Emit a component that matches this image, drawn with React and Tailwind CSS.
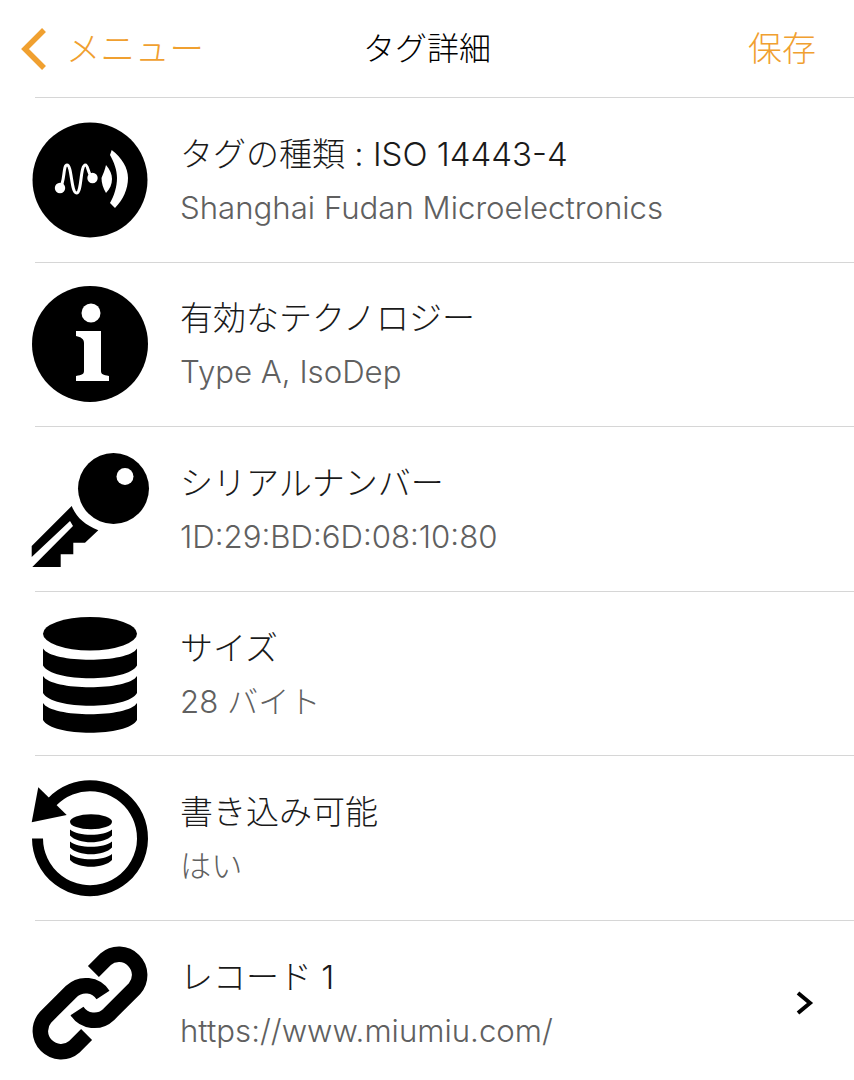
import React from 'react';

const NfcIcon = () => (
  <svg viewBox="0 0 120 120" className="w-[120px] h-[120px] shrink-0">
    <circle cx="60" cy="60" r="57.5" fill="#000" />
    <path d="M30 68 C35 62 33 45 37 45 C42 45 41 73 46.5 73 C52 73 50 45 55.5 45 C58 45 58 54 62.5 58" fill="none" stroke="#fff" strokeWidth="3" />
    <circle cx="30" cy="68" r="5.2" fill="#fff" />
    <circle cx="62.5" cy="58" r="5.2" fill="#fff" />
    <path d="M76 45 C80 50 82 54 82 59 C82 64 80 69 76 73 C73 68 71.5 63 71.5 58 C73 54 75 50 76 45 Z" fill="#fff" />
    <path d="M81.7 30 C92 38 98 48 98 58 C98 69 93 80 85 88 L80 83 C84 76 87 67 87 58 C87 50 84 42 80 35 Z" fill="#fff" />
  </svg>
);

const InfoIcon = () => (
  <svg viewBox="0 0 120 120" className="w-[120px] h-[120px] shrink-0">
    <circle cx="60" cy="60" r="58" fill="#000" />
    <circle cx="61" cy="29" r="9.5" fill="#fff" />
    <path d="M46 47 H71 V87 C71 90 73 91 79 92 V97 H46 V92 C52 91 54 90 54 87 V59 C54 55 51 53 46 52 Z" fill="#fff" />
  </svg>
);

const KeyIcon = () => (
  <svg viewBox="0 0 120 120" className="w-[120px] h-[120px] shrink-0">
    <circle cx="83.5" cy="39.5" r="35.5" fill="#000" />
    <circle cx="95" cy="27.5" r="8.5" fill="#fff" />
    <path d="M41.7 57 C46 68 55 76 68.3 81.3 L55 93.7 H43.3 V105.3 H30.7 V118 H2.3 L43 77 L40 72 L1.7 108 V97 Z" fill="#000" />
  </svg>
);

const DbBand = ({ y }) => (
  <path d={`M13 ${y} C22 ${y + 15} 98 ${y + 15} 107 ${y} V${y + 17} C98 ${y + 34} 22 ${y + 34} 13 ${y + 17} Z`} fill="#000" />
);

const DbIcon = () => (
  <svg viewBox="0 0 120 120" className="w-[120px] h-[120px] shrink-0">
    <ellipse cx="60" cy="19.7" rx="47" ry="16.7" fill="#000" />
    <DbBand y={34.5} />
    <DbBand y={62} />
    <DbBand y={89} />
  </svg>
);

const MiniBand = ({ y }) => (
  <path d={`M40 ${y} C48 ${y + 7} 74 ${y + 7} 82 ${y} V${y + 6} C74 ${y + 15} 48 ${y + 15} 40 ${y + 6} Z`} fill="#000" />
);

const RestoreIcon = () => (
  <svg viewBox="0 0 120 120" className="w-[120px] h-[120px] shrink-0">
    <path d="M7.5 60.5 A52.5 52.5 0 1 0 22 24" fill="none" stroke="#000" strokeWidth="11" />
    <path d="M8.3 9.3 L36.7 37 L1.7 44.3 Z" fill="#000" />
    <ellipse cx="61" cy="43.7" rx="21" ry="7.5" fill="#000" />
    <MiniBand y={51.5} />
    <MiniBand y={63.5} />
    <MiniBand y={76} />
  </svg>
);

const LinkIcon = () => (
  <svg viewBox="0 0 120 120" className="w-[120px] h-[120px] shrink-0">
    <g fill="none" stroke="#000" strokeWidth="15.5">
      <path d="M63.4 28.4 L75.4 16.4 A20.7 20.7 0 0 1 104.6 45.6 L78.6 71.6 A20.7 20.7 0 0 1 47 68" />
      <path d="M63.4 28.4 L75.4 16.4 A20.7 20.7 0 0 1 104.6 45.6 L78.6 71.6 A20.7 20.7 0 0 1 47 68" transform="rotate(180 60 60)" />
    </g>
  </svg>
);

const rows = [
  { Icon: NfcIcon, title: 'タグの種類 : ISO 14443-4', sub: 'Shanghai Fudan Microelectronics' },
  { Icon: InfoIcon, title: '有効なテクノロジー', sub: 'Type A, IsoDep' },
  { Icon: KeyIcon, title: 'シリアルナンバー', sub: '1D:29:BD:6D:08:10:80' },
  { Icon: DbIcon, title: 'サイズ', sub: '28 バイト' },
  { Icon: RestoreIcon, title: '書き込み可能', sub: 'はい' },
  { Icon: LinkIcon, title: 'レコード 1', sub: 'https://www.miumiu.com/', chevron: true },
];

export default function App() {
  return (
    <div className="w-[854px] h-[1080px] overflow-hidden bg-white font-['Inter','Noto_Sans_CJK_JP',sans-serif] font-light">
      {/* Nav bar */}
      <div className="h-[97px] grid grid-cols-[1fr_auto_1fr] items-center px-[21px]">
        <div className="flex items-center gap-[19px] text-[#f0a030] text-[34.5px]">
          <svg viewBox="0 0 26 44" className="w-[26px] h-[44px]">
            <path d="M23 3 L4 22 L23 41" fill="none" stroke="#f0a030" strokeWidth="5.5" />
          </svg>
          <span>メニュー</span>
        </div>
        <div className="text-center text-[32px] text-black">タグ詳細</div>
        <div className="text-right text-[#f0a030] text-[34px] mr-[17px]">保存</div>
      </div>

      {/* Detail rows */}
      {rows.map(({ Icon, title, sub, chevron }) => (
        <div key={title} className="ml-[35px] h-[164.6px] border-t border-[#d6d6d6] flex items-center">
          <div className="-ml-[5px]">
            <Icon />
          </div>
          <div className="ml-[30px] flex-1 flex flex-col gap-[12px]">
            <div className="text-[33px] leading-[44px] text-[#1a1a1a]">{title}</div>
            <div className="text-[31.2px] leading-[40px] text-[#606060]">{sub}</div>
          </div>
          {chevron && (
            <svg viewBox="0 0 18 24" className="w-[18px] h-[24px] mr-[40px]">
              <path d="M2 2 L14 12 L2 22" fill="none" stroke="#000" strokeWidth="4" />
            </svg>
          )}
        </div>
      ))}
    </div>
  );
}
